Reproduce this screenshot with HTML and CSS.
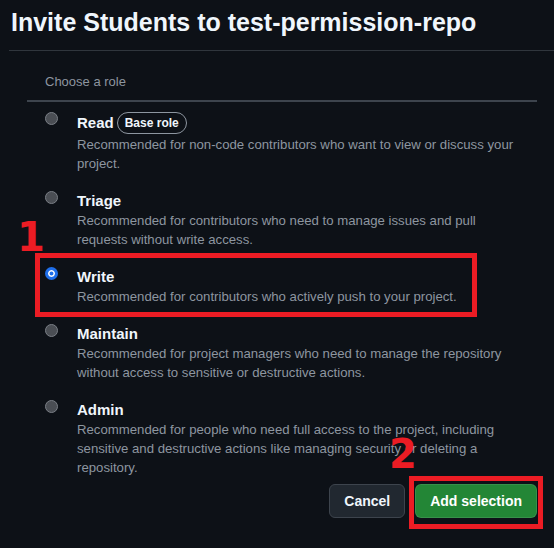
FILE: index.html
```html
<!DOCTYPE html>
<html lang="en">
<head>
<meta charset="utf-8">
<title>Invite Students</title>
<link rel="stylesheet" href="styles.css">
</head>
<body>
<div class="dialog">
  <header class="head">
    <h1 class="title">Invite Students to test-permission-repo</h1>
  </header>
  <div class="body">
    <div class="roles">
      <div class="legend">Choose a role</div>
      <ul class="list">
        <li class="role">
          <span class="radio"></span>
          <div class="text">
            <div class="name name-badge">Read <span class="badge">Base role</span></div>
            <div class="desc">Recommended for non-code contributors who want to view or discuss your project.</div>
          </div>
        </li>
        <li class="role">
          <span class="radio"></span>
          <div class="text">
            <div class="name">Triage</div>
            <div class="desc">Recommended for contributors who need to manage issues and pull requests without write access.</div>
          </div>
        </li>
        <li class="role">
          <span class="radio checked"></span>
          <div class="text">
            <div class="name">Write</div>
            <div class="desc">Recommended for contributors who actively push to your project.</div>
          </div>
        </li>
        <li class="role">
          <span class="radio"></span>
          <div class="text">
            <div class="name">Maintain</div>
            <div class="desc">Recommended for project managers who need to manage the repository without access to sensitive or destructive actions.</div>
          </div>
        </li>
        <li class="role">
          <span class="radio"></span>
          <div class="text">
            <div class="name">Admin</div>
            <div class="desc">Recommended for people who need full access to the project, including sensitive and destructive actions like managing security or deleting a repository.</div>
          </div>
        </li>
      </ul>
      <footer class="actions">
        <button class="btn">Cancel</button>
        <button class="btn primary">Add selection</button>
      </footer>
    </div>
  </div>
  <span class="mark mark-1">1</span>
  <span class="box box-1"></span>
  <span class="mark mark-2">2</span>
  <span class="box box-2"></span>
</div>
</body>
</html>
```

FILE: styles.css
```css
html, body {
  margin: 0;
  padding: 0;
  background: #0d1117;
}
body {
  font-family: "Liberation Sans", Arial, sans-serif;
  color: #f0f6fc;
  width: 554px;
  height: 548px;
  overflow: hidden;
}
.dialog {
  position: relative;
  height: 548px;
}
.head {
  margin-left: 9px;
  padding: 7px 0 13px 2px;
  border-bottom: 1px solid #30363d;
}
.title {
  margin: 0;
  font-size: 25px;
  line-height: 30px;
  font-weight: 700;
  color: #f0f6fc;
  white-space: nowrap;
}
.body {
  padding-top: 21px;
}
.roles {
  margin: 0 17px 0 27px;
}
.legend {
  padding-left: 18px;
  padding-bottom: 8px;
  font-size: 13px;
  line-height: 20px;
  color: #8d96a0;
}
.list {
  list-style: none;
  margin: 0;
  padding: 0;
  border-top: 2px solid #3d444d;
}
.role {
  display: flex;
  align-items: flex-start;
  gap: 19px;
  padding: 9px 12px 8px 18px;
}
.radio {
  flex: none;
  box-sizing: border-box;
  width: 13px;
  height: 13px;
  margin-top: 1px;
  border-radius: 50%;
  background: #4a4e54;
  border: 1px solid #7a7f86;
}
.radio.checked {
  background: #1f6feb;
  border: 3px solid #1f6feb;
  box-shadow: inset 0 0 0 1.5px #ffffff;
}
.text {
  flex: 1;
  min-width: 0;
}
.name {
  font-size: 15px;
  font-weight: 700;
  line-height: 21px;
  color: #f0f6fc;
}
.name-badge {
  line-height: 24px;
  display: flex;
  align-items: center;
  gap: 3px;
}
.badge {
  display: inline-block;
  box-sizing: border-box;
  height: 22px;
  line-height: 20px;
  padding: 0 7px;
  border: 1px solid #8d96a0;
  border-radius: 11px;
  font-size: 12px;
  font-weight: 700;
  color: #f0f6fc;
}
.desc {
  font-size: 13.2px;
  line-height: 19px;
  color: #8d96a0;
}
.actions {
  display: flex;
  justify-content: flex-end;
  gap: 10px;
  margin-top: -1px;
}
.btn {
  box-sizing: border-box;
  height: 34px;
  padding: 0 14px;
  border-radius: 6px;
  border: 1px solid #3d444d;
  background: #212830;
  color: #f0f6fc;
  font-family: "Liberation Sans", Arial, sans-serif;
  font-size: 14px;
  font-weight: 700;
}
.btn.primary {
  background: #238636;
  border-color: rgba(240, 246, 252, 0.1);
  color: #ffffff;
}
.mark {
  position: absolute;
  font-family: "DejaVu Sans", sans-serif;
  font-weight: 700;
  font-size: 40px;
  line-height: 40px;
  color: #ec1c24;
}
.mark-1 {
  left: 17px;
  top: 217px;
}
.mark-2 {
  left: 389px;
  top: 434px;
}
.box {
  position: absolute;
  box-sizing: border-box;
  border: 5px solid #ec1c24;
}
.box-1 {
  left: 35px;
  top: 253px;
  width: 442px;
  height: 64px;
}
.box-2 {
  left: 409px;
  top: 476px;
  width: 134px;
  height: 53px;
}
```
